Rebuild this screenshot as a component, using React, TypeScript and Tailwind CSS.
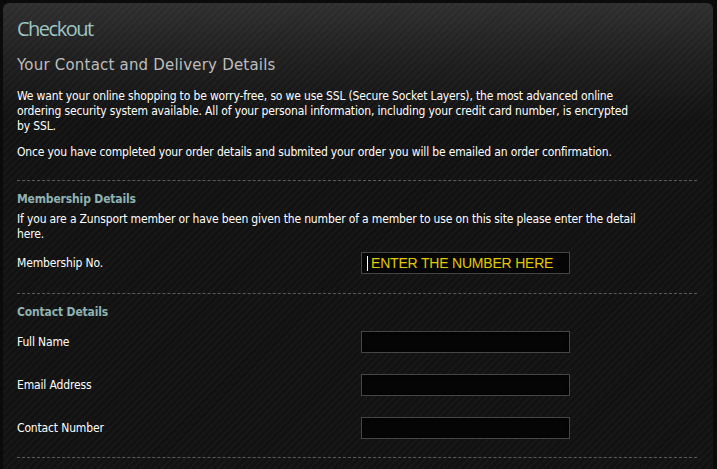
const body = "font-['DejaVu_Sans_Condensed',sans-serif] text-[12px] leading-[15px] tracking-[-0.15px]";

function Divider() {
  return <div className="h-0 border-t border-dashed border-[#5a5a5a] mr-[16px]" />;
}

function Field({ label, top }: { label: string; top: string }) {
  return (
    <div className={`grid grid-cols-[344px_209px] items-center ${top}`}>
      <span className="text-white">{label}</span>
      <input
        type="text"
        className="h-[22px] border border-[#464646] bg-[#050505] shadow-[inset_0_1px_3px_rgba(0,0,0,0.9)] outline-none"
      />
    </div>
  );
}

export default function App() {
  return (
    <div className="min-h-[469px] w-full bg-[#0b0b0b] pt-[3px] pl-[3px] overflow-hidden">
      <div className="w-[710px] min-h-[466px] rounded-t-[6px] bg-[#121212] bg-[image:linear-gradient(180deg,rgba(255,255,255,0.12)_0px,rgba(255,255,255,0.05)_60px,rgba(255,255,255,0)_120px),repeating-linear-gradient(135deg,rgba(255,255,255,0.025)_0px,rgba(255,255,255,0.025)_2px,rgba(0,0,0,0)_2px,rgba(0,0,0,0)_5px)] pl-[14px] pt-[13px]">
        <h1 className="font-['Open_Sans',sans-serif] text-[20px] leading-[26px] tracking-[-1.5px] text-[#9cc4c4]">
          Checkout
        </h1>
        <h2 className="mt-[13px] font-['DejaVu_Sans',sans-serif] text-[15px] leading-[20px] tracking-[0.2px] text-[#bdbdbd]">
          Your Contact and Delivery Details
        </h2>

        <div className={`${body} text-white mt-[14px]`}>
          <p className="whitespace-nowrap">
            We want your online shopping to be worry-free, so we use SSL (Secure Socket Layers), the most advanced online
            <br />
            ordering security system available. All of your personal information, including your credit card number, is encrypted
            <br />
            by SSL.
          </p>
          <p className="mt-[11px] whitespace-nowrap">
            Once you have completed your order details and submited your order you will be emailed an order confirmation.
          </p>

          <div className="mt-[20px]">
            <Divider />
          </div>

          <h3 className="mt-[11px] font-bold text-[#8fb2b2]">Membership Details</h3>
          <p className="mt-[5px] whitespace-nowrap">
            If you are a Zunsport member or have been given the number of a member to use on this site please enter the detail
            <br />
            here.
          </p>
          <div className="grid grid-cols-[344px_209px] items-center mt-[10px]">
            <span>Membership No.</span>
            <div className="relative h-[22px] border border-[#464646] bg-[#050505] flex items-center pl-[9px]">
              <span className="absolute left-[5px] top-[3px] h-[15px] w-px bg-white" />
              <span className="font-['Liberation_Sans',sans-serif] text-[14px] leading-none text-[#e0cb00] tracking-[-0.2px]">
                ENTER THE NUMBER HERE
              </span>
            </div>
          </div>

          <div className="mt-[19px]">
            <Divider />
          </div>

          <h3 className="mt-[11px] font-bold text-[#8fb2b2]">Contact Details</h3>
          <Field label="Full Name" top="mt-[11px]" />
          <Field label="Email Address" top="mt-[21px]" />
          <Field label="Contact Number" top="mt-[21px]" />

          <div className="mt-[18px]">
            <Divider />
          </div>
        </div>
      </div>
    </div>
  );
}
